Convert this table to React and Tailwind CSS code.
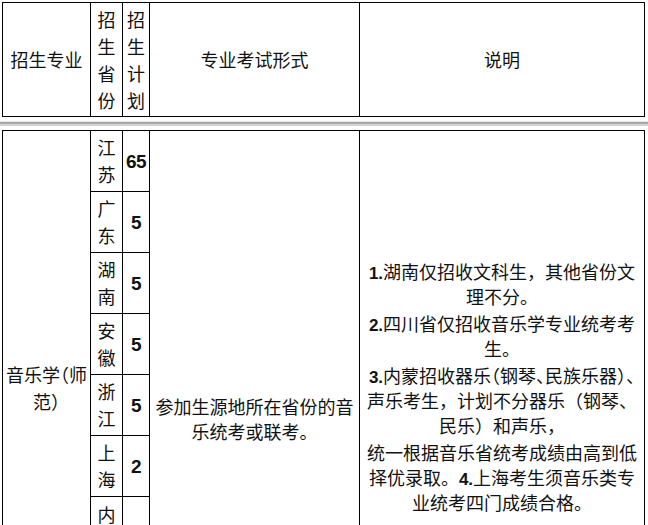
import React from "react";

const rows = [
  { prov: ["江", "苏"], plan: "65", h: "h-[61px]" },
  { prov: ["广", "东"], plan: "5", h: "h-[61px]" },
  { prov: ["湖", "南"], plan: "5", h: "h-[61px]" },
  { prov: ["安", "徽"], plan: "5", h: "h-[61px]" },
  { prov: ["浙", "江"], plan: "5", h: "h-[61px]" },
  { prov: ["上", "海"], plan: "2", h: "h-[61px]" },
  { prov: ["内", "蒙", "古"], plan: "", h: "h-[89px]" },
  { prov: ["四", "川"], plan: "", h: "h-[61px]" },
];

const Num = ({ children }) => (
  <b className="font-num text-[17px]">{children}</b>
);

const notes = [
  [
    <>
      <Num>1.</Num>湖南仅招收文科生，其他省份文
    </>,
    "理不分。",
  ],
  [
    <>
      <Num>2.</Num>四川省仅招收音乐学专业统考考
    </>,
    "生。",
  ],
  [
    <span className="[font-feature-settings:'halt']">
      <Num>3.</Num>内蒙招收器乐（钢琴、民族乐器）、
    </span>,
    "声乐考生，计划不分器乐（钢琴、",
    "民乐）和声乐，",
  ],
  [
    "统一根据音乐省统考成绩由高到低",
    <>
      择优录取。<Num>4.</Num>上海考生须音乐类专
    </>,
    "业统考四门成绩合格。",
  ],
];

const Stack = ({ chars }) => (
  <div className="flex flex-col items-center leading-[27px]">
    {chars.map((c, i) => (
      <span key={i}>{c}</span>
    ))}
  </div>
);

const App = () => {
  return (
    <div className="w-[648px] h-[525px] overflow-hidden bg-white text-[18px] text-[#111] font-['Noto_Sans_CJK_SC','Noto_Sans',sans-serif]">
      <style>{`.font-num{font-family:"Liberation Sans",Arial,sans-serif;font-weight:700;line-height:1}`}</style>

      {/* header */}
      <div className="ml-[2px] mt-[2px] w-[643px] h-[115px] flex border border-black">
        <div className="w-[88px] border-r border-black flex items-center justify-center">
          招生专业
        </div>
        <div className="w-[32px] border-r border-black flex items-center justify-center">
          <Stack chars={["招", "生", "省", "份"]} />
        </div>
        <div className="w-[27px] border-r border-black flex items-center justify-center">
          <Stack chars={["招", "生", "计", "划"]} />
        </div>
        <div className="w-[210px] border-r border-black flex items-center justify-center">
          专业考试形式
        </div>
        <div className="flex-1 flex items-center justify-center">说明</div>
      </div>

      {/* separator band */}
      <div className="mt-[4px] h-[1px] bg-[#e4e4e4]" />
      <div className="h-[2px] bg-[#a9a9a9]" />
      <div className="h-[2px] bg-[#d4d4d4]" />
      <div className="h-[4px]" />

      {/* body */}
      <div className="ml-[2px] w-[643px] flex border-l border-t border-r border-black">
        <div className="w-[88px] border-r border-black pt-[230px] text-center leading-[27px] [font-feature-settings:'halt']">
          音乐学（师
          <br />
          范）
        </div>
        <div className="w-[59px] border-r border-black flex flex-col">
          {rows.map((r, i) => (
            <div key={i} className={`${r.h} flex border-b border-black shrink-0`}>
              <div className="w-[32px] border-r border-black flex items-center justify-center">
                <Stack chars={r.prov} />
              </div>
              <div className="flex-1 flex items-center justify-center">
                <span className="font-num text-[19px] tracking-[-0.5px]">{r.plan}</span>
              </div>
            </div>
          ))}
        </div>
        <div className="w-[210px] border-r border-black pt-[263px] text-center leading-[25px]">
          参加生源地所在省份的音
          <br />
          乐统考或联考。
        </div>
        <div className="flex-1 px-[2px] pt-[128px] text-center leading-[25px] flex flex-col gap-[2px]">
          {notes.map((p, i) => (
            <div key={i}>
              {p.map((line, j) => (
                <div key={j} className="whitespace-nowrap h-[25px]">
                  {line}
                </div>
              ))}
            </div>
          ))}
        </div>
      </div>
    </div>
  );
};

export default App;
